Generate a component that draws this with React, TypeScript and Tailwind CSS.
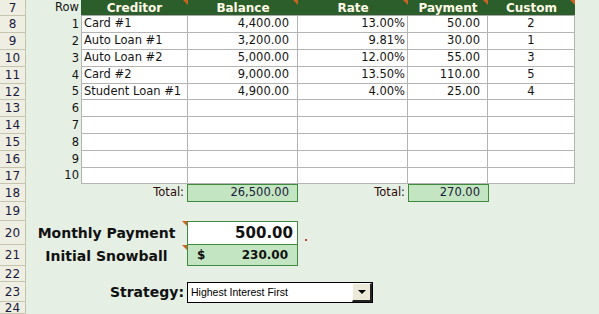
const font = "font-['DejaVu_Sans',sans-serif]"

const data = [
  { n: 1, c: "Card #1", b: "4,400.00", r: "13.00%", p: "50.00", x: "2", h: "h-[17px]" },
  { n: 2, c: "Auto Loan #1", b: "3,200.00", r: "9.81%", p: "30.00", x: "1", h: "h-[17px]" },
  { n: 3, c: "Auto Loan #2", b: "5,000.00", r: "12.00%", p: "55.00", x: "3", h: "h-[17px]" },
  { n: 4, c: "Card #2", b: "9,000.00", r: "13.50%", p: "110.00", x: "5", h: "h-[17px]" },
  { n: 5, c: "Student Loan #1", b: "4,900.00", r: "4.00%", p: "25.00", x: "4", h: "h-[16px]" },
  { n: 6, c: "", b: "", r: "", p: "", x: "", h: "h-[17px]" },
  { n: 7, c: "", b: "", r: "", p: "", x: "", h: "h-[17px]" },
  { n: 8, c: "", b: "", r: "", p: "", x: "", h: "h-[17px]" },
  { n: 9, c: "", b: "", r: "", p: "", x: "", h: "h-[17px]" },
  { n: 10, c: "", b: "", r: "", p: "", x: "", h: "h-[16px]" },
]

function RowHead({ n }: { n: number }) {
  return (
    <div className="w-[26px] shrink-0 h-full flex items-center justify-center bg-[#efeee2] border-r border-b border-[#c6c3ae] text-[12px] text-[#1a1a40]">
      {n}
    </div>
  )
}

function Tri() {
  return <span className="absolute top-0 right-0 w-0 h-0 border-l-[5px] border-l-transparent border-t-[5px] border-t-[#c8641e]" />
}

function HeadCell({ w, label }: { w: string; label: string }) {
  return (
    <div className={`relative ${w} shrink-0 h-full flex items-center justify-center font-bold text-[12px] text-[#fffbe6] border-b border-[#a8a8a8]`}>
      {label}
      <Tri />
    </div>
  )
}

export default function App() {
  const cell = "shrink-0 h-full flex items-center bg-white border-r border-b border-[#b4b4b4] text-[#141414]"
  return (
    <div className={`w-[599px] h-[314px] overflow-hidden bg-[#e5efe3] ${font} text-[11.5px] leading-none`}>
      {/* row 7: header */}
      <div className="flex h-[16px]">
        <RowHead n={7} />
        <div className="w-[55px] shrink-0 flex items-center justify-end pr-[2px] text-[#141414]">Row</div>
        <div className="flex bg-[#2b5e2b]">
          <HeadCell w="w-[107px]" label="Creditor" />
          <HeadCell w="w-[110px]" label="Balance" />
          <HeadCell w="w-[110px]" label="Rate" />
          <HeadCell w="w-[80px]" label="Payment" />
          <HeadCell w="w-[87px]" label="Custom" />
        </div>
      </div>

      {/* rows 8-17 */}
      {data.map((d) => (
        <div key={d.n} className={`flex ${d.h}`}>
          <RowHead n={d.n + 7} />
          <div className="w-[55px] shrink-0 flex items-center justify-end pr-[2px] text-[#141414]">{d.n}</div>
          <div className={`${cell} w-[107px] border-l pl-[2px]`}>{d.c}</div>
          <div className={`${cell} w-[110px] justify-end pr-[8px]`}>{d.b}</div>
          <div className={`${cell} w-[110px] justify-end pr-[2px]`}>{d.r}</div>
          <div className={`${cell} w-[80px] justify-end pr-[7px]`}>{d.p}</div>
          <div className={`${cell} w-[87px] justify-center`}>{d.x}</div>
        </div>
      ))}

      {/* row 18: totals */}
      <div className="flex h-[18px]">
        <RowHead n={18} />
        <div className="w-[55px] shrink-0" />
        <div className="w-[106px] shrink-0 flex items-center justify-end pr-[3px] text-[#2a0c0c]">Total:</div>
        <div className="w-[111px] shrink-0 flex items-center justify-end pr-[8px] bg-[#c3e5c1] border border-[#3e8a3e] text-[#1a1a3a]">26,500.00</div>
        <div className="w-[110px] shrink-0 flex items-center justify-end pr-[3px] text-[#2a0c0c]">Total:</div>
        <div className="w-[81px] shrink-0 flex items-center justify-end pr-[8px] bg-[#c3e5c1] border border-[#3e8a3e] text-[#1a1a3a]">270.00</div>
      </div>

      {/* row 19 */}
      <div className="flex h-[19px]">
        <RowHead n={19} />
      </div>

      {/* row 20 */}
      <div className="flex h-[24px]">
        <RowHead n={20} />
        <div className="relative w-[161px] shrink-0 flex items-center justify-center font-bold text-[14px] text-[#111]">
          Monthly Payment
          <Tri />
        </div>
        <div className="w-[111px] shrink-0 flex items-center justify-end pr-[4px] bg-white border border-[#3e8a3e] font-bold text-[15px] text-[#111]">500.00</div>
        <div className="relative w-[20px] shrink-0">
          <span className="absolute left-[7px] top-[18px] w-[2px] h-[2px] bg-[#c04040]" />
        </div>
      </div>

      {/* row 21 */}
      <div className="flex h-[21px]">
        <RowHead n={21} />
        <div className="relative w-[161px] shrink-0 flex items-center justify-center font-bold text-[14px] text-[#111]">
          Initial Snowball
          <Tri />
        </div>
        <div className="w-[111px] shrink-0 flex items-center justify-between pl-[9px] pr-[9px] bg-[#c3e5c1] border-x border-b border-[#3e8a3e] font-bold text-[12px] text-[#111]">
          <span>$</span>
          <span>230.00</span>
        </div>
      </div>

      {/* row 22 */}
      <div className="flex h-[16px]">
        <RowHead n={22} />
      </div>

      {/* row 23 */}
      <div className="flex h-[20px]">
        <RowHead n={23} />
        <div className="w-[161px] shrink-0 flex items-center justify-end pr-[3px] font-bold text-[14px] text-[#111]">Strategy:</div>
        <div className="w-[186px] h-[21px] shrink-0 flex items-center bg-white border border-black">
          <span className="flex-1 pl-[3px] font-['Liberation_Sans',sans-serif] text-[10.5px] text-black">Highest Interest First</span>
          <div className="w-[20px] h-full flex items-center justify-center bg-[#ece9d8] border-t border-l border-t-white border-l-white border-r-2 border-b-2 border-r-[#222] border-b-[#222]">
            <span className="w-0 h-0 border-l-[4px] border-r-[4px] border-t-[4px] border-l-transparent border-r-transparent border-t-black" />
          </div>
        </div>
      </div>

      {/* row 24 */}
      <div className="flex h-[12px]">
        <RowHead n={24} />
      </div>
    </div>
  )
}
